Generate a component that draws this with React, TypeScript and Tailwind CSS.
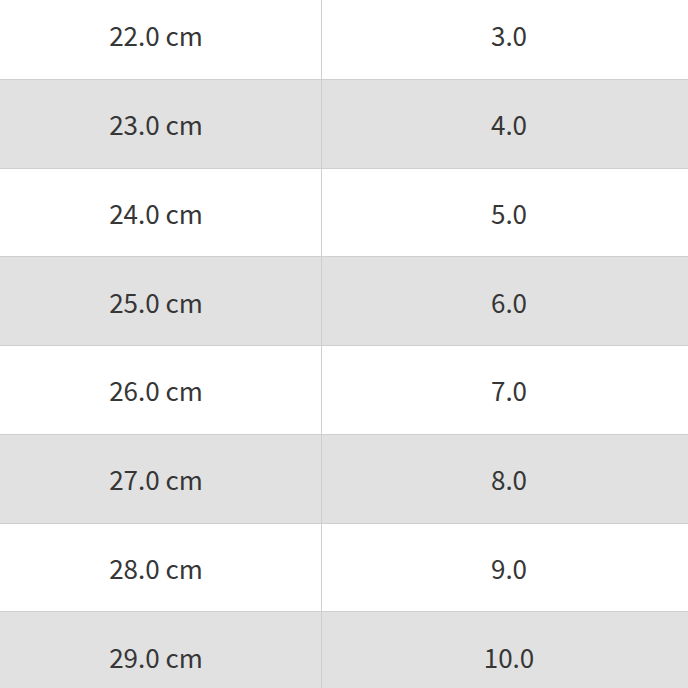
const rows = [
  ["22.0 cm", "3.0"],
  ["23.0 cm", "4.0"],
  ["24.0 cm", "5.0"],
  ["25.0 cm", "6.0"],
  ["26.0 cm", "7.0"],
  ["27.0 cm", "8.0"],
  ["28.0 cm", "9.0"],
  ["29.0 cm", "10.0"],
];

export default function App() {
  return (
    <div className="h-[688px] w-[688px] overflow-hidden bg-white">
      <div
        className="-ml-[9px] -mt-[9px] w-[705px] text-[26px] text-[#363636]"
        style={{ fontFamily: '"Noto Sans CJK SC", "Noto Sans", sans-serif' }}
      >
        {rows.map(([cm, size], i) => (
          <div
            key={cm}
            className={`flex h-[88.75px] border-b border-[#cfcfcf] ${
              i % 2 === 1 ? "bg-[#e1e1e1]" : "bg-white"
            }`}
          >
            <div className="flex w-[331px] items-center justify-center border-r border-[#cfcfcf]">
              {cm}
            </div>
            <div className="flex flex-1 items-center justify-center">{size}</div>
          </div>
        ))}
      </div>
    </div>
  );
}
